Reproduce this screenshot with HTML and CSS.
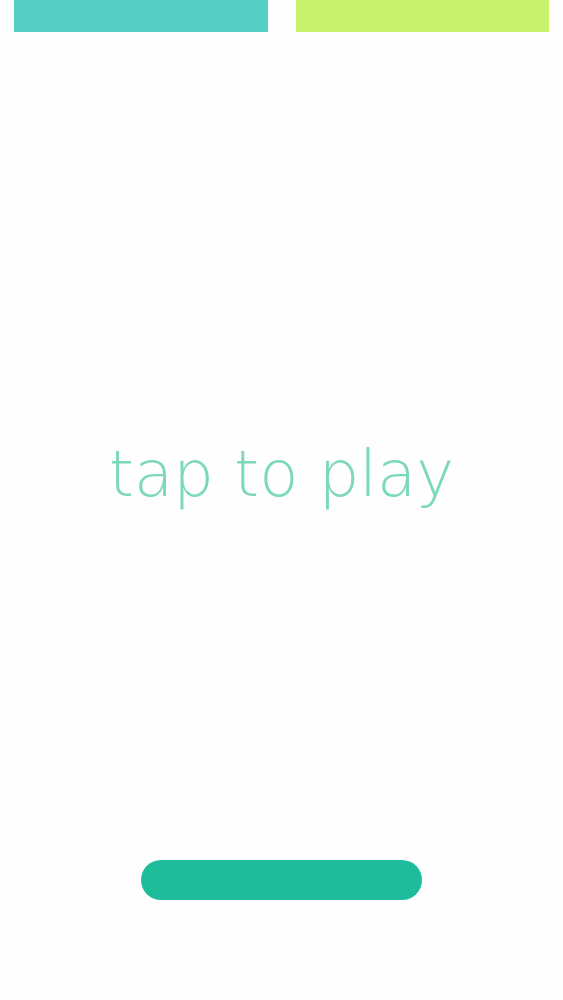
FILE: index.html
```html
<!DOCTYPE html>
<html lang="en">
<head>
<meta charset="utf-8">
<meta name="viewport" content="width=device-width, initial-scale=1">
<title>tap to play</title>
<link rel="stylesheet" href="styles.css">
</head>
<body>
<main class="game">
  <div class="blocks">
    <div class="block block-teal"></div>
    <div class="block block-lime"></div>
  </div>
  <button class="play" type="button">tap to play</button>
  <div class="paddle"></div>
</main>
</body>
</html>
```

FILE: styles.css
```css
* {
  box-sizing: border-box;
}

body {
  margin: 0;
  background: #fefefe;
}

.game {
  display: flex;
  flex-direction: column;
  align-items: center;
  min-height: 100vh;
  padding-bottom: 100px;
}

.blocks {
  display: grid;
  grid-template-columns: 1fr 1fr;
  gap: 28px;
  width: 100%;
  padding: 0 14px;
}

.block {
  height: 32px;
}

.block-teal {
  background: #55cec4;
}

.block-lime {
  background: #c8f26b;
}

.play {
  flex: 1;
  width: 100%;
  padding: 56px 0 0;
  border: 0;
  background: none;
  color: #7cd8bd;
  font-family: "DejaVu Sans Light", "DejaVu Sans", sans-serif;
  font-size: 64px;
  font-weight: 200;
  line-height: 80px;
  cursor: pointer;
}

.paddle {
  width: 50%;
  height: 40px;
  border-radius: 20px;
  background: #1fbc9c;
}
```
